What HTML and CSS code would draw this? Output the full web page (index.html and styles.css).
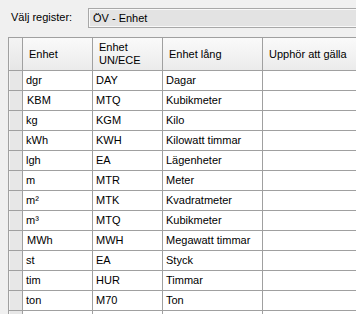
FILE: index.html
```html
<!DOCTYPE html>
<html lang="sv">
<head>
	<meta charset="UTF-8">
	<title>Enheter</title>
<link rel="stylesheet" href="styles.css">
</head>
<body>
<div class="window">

<div class="top">
	<span class="top-label">Välj register:</span>
	<div class="combo"><span>ÖV - Enhet</span></div>
</div>

<div class="grid">
	<div class="rh hd"></div>
	<div class="hd">Enhet</div>
	<div class="hd">Enhet<br>UN/ECE</div>
	<div class="hd">Enhet lång</div>
	<div class="hd">Upphör att gälla</div>

	<div class="rh"></div><div>dgr</div><div>DAY</div><div>Dagar</div><div></div>
	<div class="rh"></div><div class="sp">KBM</div><div>MTQ</div><div>Kubikmeter</div><div></div>
	<div class="rh"></div><div>kg</div><div>KGM</div><div>Kilo</div><div></div>
	<div class="rh"></div><div>kWh</div><div>KWH</div><div>Kilowatt timmar</div><div></div>
	<div class="rh"></div><div>lgh</div><div>EA</div><div>Lägenheter</div><div></div>
	<div class="rh"></div><div>m</div><div>MTR</div><div>Meter</div><div></div>
	<div class="rh"></div><div>m²</div><div>MTK</div><div>Kvadratmeter</div><div></div>
	<div class="rh"></div><div>m³</div><div>MTQ</div><div>Kubikmeter</div><div></div>
	<div class="rh"></div><div class="sp">MWh</div><div>MWH</div><div>Megawatt timmar</div><div></div>
	<div class="rh"></div><div>st</div><div>EA</div><div>Styck</div><div></div>
	<div class="rh"></div><div>tim</div><div>HUR</div><div>Timmar</div><div></div>
	<div class="rh"></div><div>ton</div><div>M70</div><div>Ton</div><div></div>
	<div class="rh"></div><div></div><div></div><div></div><div></div>
</div>

</div>
</body>
</html>
```

FILE: styles.css
```css
*{margin:0;padding:0;box-sizing:border-box;}

body{background:#f0f0f0;font-family:"Liberation Sans",Arial,sans-serif;font-size:11px;color:#000;}
.window{width:356px;height:314px;overflow:hidden;}

/* register selector */
.top{display:flex;align-items:flex-start;padding:8px 0 0 11px;height:37px;}
.top-label{width:77px;line-height:19px;white-space:nowrap;flex:none;}
.combo{flex:1;height:20px;border:1px solid #a8a8a8;border-right:0;background:#e3e3e3;box-shadow:inset 1px 1px 0 #f8f8f8,inset 0 -1px 0 #f8f8f8;padding-left:4px;line-height:18px;white-space:nowrap;}

/* data grid */
.grid{display:grid;grid-template-columns:14px 70px 70px 100px 100px;grid-template-rows:33px;grid-auto-rows:20px;margin-left:8px;border-left:1px solid #a0a0a0;border-top:1px solid #a0a0a0;}
.grid > div{border-right:1px solid #a0a0a0;border-bottom:1px solid #a0a0a0;background:#fff;padding-left:3px;line-height:19px;white-space:nowrap;overflow:hidden;}
.grid > .sp{padding-left:4px;}
.grid > .hd{background:linear-gradient(#fafafa,#ebebeb);padding-left:6px;line-height:13px;display:flex;align-items:center;}
.grid > .rh{background:#e7e7e7;box-shadow:inset 1px 0 0 #f4f4f4;}
.grid > .rh.hd{background:linear-gradient(#f4f4f4,#e6e6e6);}
```
